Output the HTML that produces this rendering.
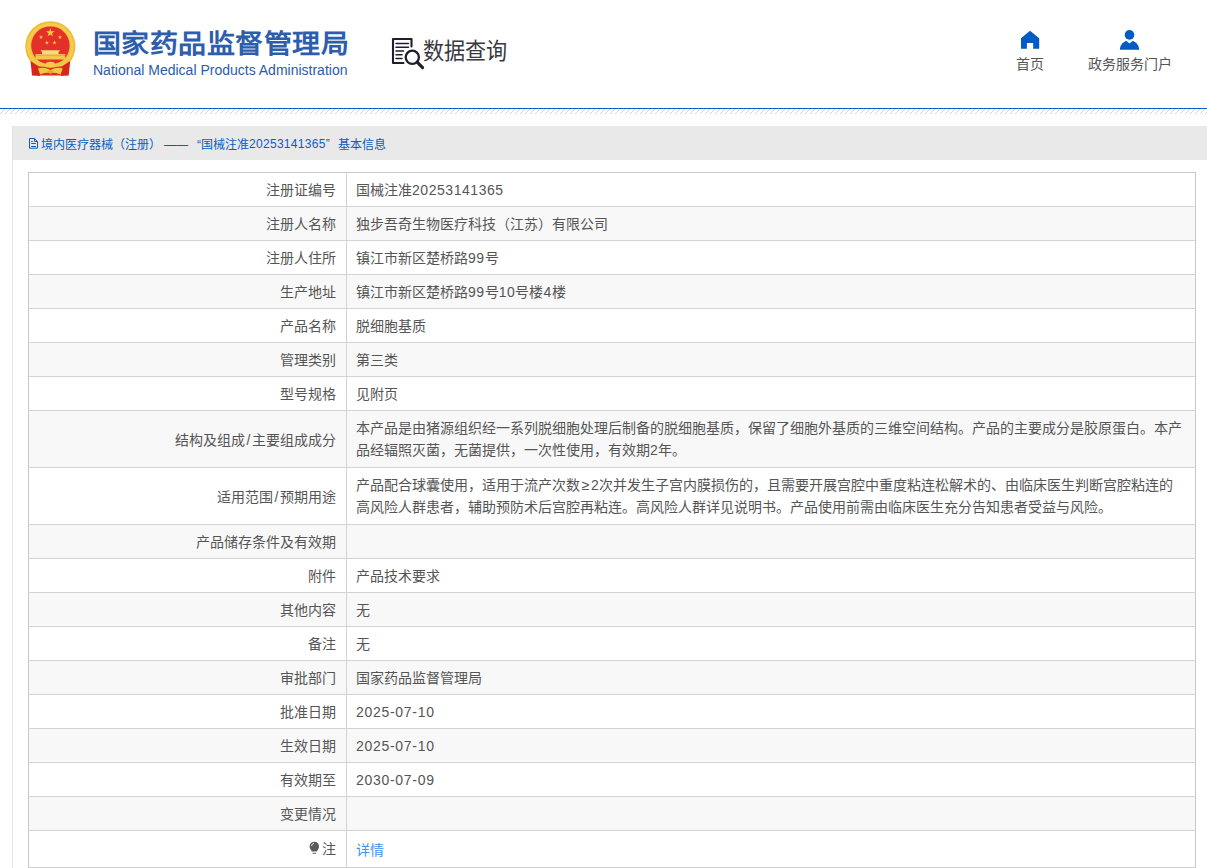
<!DOCTYPE html>
<html lang="zh-CN">
<head>
<meta charset="utf-8">
<style>
*{margin:0;padding:0;box-sizing:border-box;}
html,body{width:1207px;height:868px;overflow:hidden;background:#fff;}
body{font-family:"Liberation Sans",sans-serif;color:#555;position:relative;}
.hdr{position:absolute;left:0;top:0;width:1207px;height:108px;background:#fff;}
.logo{position:absolute;left:0;top:0;width:100px;height:90px;}
.title{position:absolute;left:93px;top:27px;font-size:28px;font-weight:900;transform:scaleY(0.95);transform-origin:0 12px;color:#2d5eae;white-space:nowrap;line-height:36px;letter-spacing:0.45px;}
.entitle{position:absolute;left:93px;top:61.3px;font-size:14px;color:#2a5caa;white-space:nowrap;line-height:18px;}
.sjicon{position:absolute;left:390px;top:36px;width:36px;height:36px;}
.sjtext{position:absolute;left:423px;top:35.5px;font-size:22px;transform:scale(0.96,1.04);transform-origin:0 0;color:#38383f;font-weight:500;white-space:nowrap;line-height:30px;}
.nav{position:absolute;top:28px;text-align:center;font-size:14px;color:#555;white-space:nowrap;}
.nav svg{display:block;margin:0 auto;}
.nav span{position:absolute;left:0;top:26px;line-height:20px;width:100%;}
.blueline{position:absolute;left:0;top:108px;width:1207px;height:1px;background:#0a5fc0;}
.hatch{position:absolute;left:0;top:109px;width:1207px;height:5px;}
.box{position:absolute;left:12px;top:126px;width:1199px;height:760px;border-left:1px solid #e3e3e3;}
.crumb{position:absolute;left:0;top:0;width:1199px;height:34px;background:#e9e9e9;font-size:12px;color:#0a5cc0;line-height:34px;white-space:nowrap;}
table{position:absolute;left:15px;top:46px;width:1168px;border-collapse:collapse;font-size:14px;color:#555;}
td{border:1px solid #d3d3d3;padding:6px 10px 4px 9px;line-height:23px;vertical-align:middle;}
td.l{width:318px;text-align:right;padding-right:10px;}
tr.g td{background:#f8f8f8;}
td.m{line-height:22px;padding-top:6px;padding-bottom:6px;}
span.n{letter-spacing:0.3px;}
td span.n{letter-spacing:0.55px;}
span.d{letter-spacing:0.7px;}
td.l{border-left-color:#c8c8c8;}
tr:first-child td{border-top-color:#c8c8c8;}
td+td{border-right-color:#c8c8c8;}
tr.last td{border-bottom:2px solid #cdcdcd;}
a{color:#3c94f5;text-decoration:none;}
</style>
</head>
<body>
<div class="hdr">
  <svg class="logo" viewBox="0 0 100 90" width="100" height="90">
    <circle cx="50.35" cy="46.3" r="25.1" fill="#edbd35"/>
    <circle cx="50.35" cy="46.3" r="23.3" fill="#f4cd4e"/>
    <circle cx="50.35" cy="46.3" r="20.6" fill="#f0c23c"/>
    <path d="M30.5 61 L39 66.5 L40 76 L32 75.6 Z" fill="#d9261c"/>
    <path d="M70.2 61 L61.7 66.5 L60.7 76 L68.7 75.6 Z" fill="#d9261c"/>
    <path d="M37.5 66.5 L63.2 66.5 L61.5 75.5 L39 75.5 Z" fill="#e02e20"/>
    <circle cx="50.4" cy="45.6" r="19.2" fill="#e5302a"/>
    <path d="M33.5 59.5 Q50.4 72.5 67.3 59.5" fill="none" stroke="#f2c640" stroke-width="3.4"/>
    <path d="M40.5 50.2 H60.2 L58.6 52 V54.2 H42 V52 Z" fill="#f7dc78"/>
    <rect x="35.5" y="54.2" width="29.7" height="1.4" fill="#f6d86a"/>
    <rect x="35.5" y="55.6" width="29.7" height="3.9" fill="#f0c94a"/>
    <ellipse cx="50.4" cy="64.6" rx="4.8" ry="2.8" fill="#f3cd48"/>
    <path d="M38 68.5 Q44 66.5 50.4 70 Q56.8 66.5 62.7 68.5 L60.5 74.5 Q55 71.5 50.4 73.5 Q45.8 71.5 40.2 74.5 Z" fill="#f2c843"/>
    <ellipse cx="50.4" cy="71.8" rx="3" ry="1.6" fill="#e2a92a"/>
    <path d="M50.30,27.90 L51.36,31.15 L54.77,31.15 L52.01,33.15 L53.06,36.40 L50.30,34.40 L47.54,36.40 L48.59,33.15 L45.83,31.15 L49.24,31.15Z" fill="#e6d03c"/><path d="M41.00,34.90 L41.52,36.49 L43.19,36.49 L41.84,37.47 L42.35,39.06 L41.00,38.08 L39.65,39.06 L40.16,37.47 L38.81,36.49 L40.48,36.49Z" fill="#e6d03c"/><path d="M60.00,34.90 L60.52,36.49 L62.19,36.49 L60.84,37.47 L61.35,39.06 L60.00,38.08 L58.65,39.06 L59.16,37.47 L57.81,36.49 L59.48,36.49Z" fill="#e6d03c"/><path d="M46.90,40.30 L47.42,41.89 L49.09,41.89 L47.74,42.87 L48.25,44.46 L46.90,43.48 L45.55,44.46 L46.06,42.87 L44.71,41.89 L46.38,41.89Z" fill="#e6d03c"/><path d="M54.50,40.30 L55.02,41.89 L56.69,41.89 L55.34,42.87 L55.85,44.46 L54.50,43.48 L53.15,44.46 L53.66,42.87 L52.31,41.89 L53.98,41.89Z" fill="#e6d03c"/>
  </svg>
  <div class="title">国家药品监督管理局</div>
  <div class="entitle">National Medical Products Administration</div>
  <svg class="sjicon" viewBox="0 0 36 36" width="36" height="36">
    <path d="M21.5 10.5 V3 H3 V27 H13.5" fill="none" stroke="#1e1e2e" stroke-width="2.1" stroke-linejoin="round" stroke-linecap="round"/>
    <path d="M6 7.5 H18.5 M6 11.3 H18.5 M6 15 H13.5 M6 18.8 H12 M6 22.5 H12" stroke="#1e1e2e" stroke-width="1.5" stroke-linecap="round"/>
    <circle cx="22.3" cy="21.3" r="6.6" fill="none" stroke="#1e1e2e" stroke-width="2.3"/>
    <path d="M27.2 26.2 L32.6 31.6" stroke="#1e1e2e" stroke-width="3.1" stroke-linecap="round"/>
  </svg>
  <div class="sjtext">数据查询</div>
  <div class="nav" style="left:1016px;width:28px;">
    <svg width="20" height="22" viewBox="0 0 20 22" style="margin-left:4px;"><path d="M10 2.8 L19.2 10.2 V20.7 H13.2 V15 H6.9 V20.7 H1 V10.2 Z" fill="#005bc2"/></svg>
    <span>首页</span>
  </div>
  <div class="nav" style="left:1088px;width:84px;">
    <svg width="22" height="22" viewBox="0 0 22 22"><circle cx="10.5" cy="6.9" r="4.8" fill="#005bc2"/><path d="M0.8 21.7 A9.7 9.4 0 0 1 20.2 21.7 Z" fill="#005bc2"/><path d="M6.6 12.2 L14.4 12.2 L10.5 15.6 Z" fill="#fff"/></svg>
    <span>政务服务门户</span>
  </div>
</div>
<div class="blueline"></div>
<svg class="hatch" width="1207" height="5"><path d="M-1 6L6 -1M4 6L11 -1M9 6L16 -1M14 6L21 -1M19 6L26 -1M24 6L31 -1M29 6L36 -1M34 6L41 -1M39 6L46 -1M44 6L51 -1M49 6L56 -1M54 6L61 -1M59 6L66 -1M64 6L71 -1M69 6L76 -1M74 6L81 -1M79 6L86 -1M84 6L91 -1M89 6L96 -1M94 6L101 -1M99 6L106 -1M104 6L111 -1M109 6L116 -1M114 6L121 -1M119 6L126 -1M124 6L131 -1M129 6L136 -1M134 6L141 -1M139 6L146 -1M144 6L151 -1M149 6L156 -1M154 6L161 -1M159 6L166 -1M164 6L171 -1M169 6L176 -1M174 6L181 -1M179 6L186 -1M184 6L191 -1M189 6L196 -1M194 6L201 -1M199 6L206 -1M204 6L211 -1M209 6L216 -1M214 6L221 -1M219 6L226 -1M224 6L231 -1M229 6L236 -1M234 6L241 -1M239 6L246 -1M244 6L251 -1M249 6L256 -1M254 6L261 -1M259 6L266 -1M264 6L271 -1M269 6L276 -1M274 6L281 -1M279 6L286 -1M284 6L291 -1M289 6L296 -1M294 6L301 -1M299 6L306 -1M304 6L311 -1M309 6L316 -1M314 6L321 -1M319 6L326 -1M324 6L331 -1M329 6L336 -1M334 6L341 -1M339 6L346 -1M344 6L351 -1M349 6L356 -1M354 6L361 -1M359 6L366 -1M364 6L371 -1M369 6L376 -1M374 6L381 -1M379 6L386 -1M384 6L391 -1M389 6L396 -1M394 6L401 -1M399 6L406 -1M404 6L411 -1M409 6L416 -1M414 6L421 -1M419 6L426 -1M424 6L431 -1M429 6L436 -1M434 6L441 -1M439 6L446 -1M444 6L451 -1M449 6L456 -1M454 6L461 -1M459 6L466 -1M464 6L471 -1M469 6L476 -1M474 6L481 -1M479 6L486 -1M484 6L491 -1M489 6L496 -1M494 6L501 -1M499 6L506 -1M504 6L511 -1M509 6L516 -1M514 6L521 -1M519 6L526 -1M524 6L531 -1M529 6L536 -1M534 6L541 -1M539 6L546 -1M544 6L551 -1M549 6L556 -1M554 6L561 -1M559 6L566 -1M564 6L571 -1M569 6L576 -1M574 6L581 -1M579 6L586 -1M584 6L591 -1M589 6L596 -1M594 6L601 -1M599 6L606 -1M604 6L611 -1M609 6L616 -1M614 6L621 -1M619 6L626 -1M624 6L631 -1M629 6L636 -1M634 6L641 -1M639 6L646 -1M644 6L651 -1M649 6L656 -1M654 6L661 -1M659 6L666 -1M664 6L671 -1M669 6L676 -1M674 6L681 -1M679 6L686 -1M684 6L691 -1M689 6L696 -1M694 6L701 -1M699 6L706 -1M704 6L711 -1M709 6L716 -1M714 6L721 -1M719 6L726 -1M724 6L731 -1M729 6L736 -1M734 6L741 -1M739 6L746 -1M744 6L751 -1M749 6L756 -1M754 6L761 -1M759 6L766 -1M764 6L771 -1M769 6L776 -1M774 6L781 -1M779 6L786 -1M784 6L791 -1M789 6L796 -1M794 6L801 -1M799 6L806 -1M804 6L811 -1M809 6L816 -1M814 6L821 -1M819 6L826 -1M824 6L831 -1M829 6L836 -1M834 6L841 -1M839 6L846 -1M844 6L851 -1M849 6L856 -1M854 6L861 -1M859 6L866 -1M864 6L871 -1M869 6L876 -1M874 6L881 -1M879 6L886 -1M884 6L891 -1M889 6L896 -1M894 6L901 -1M899 6L906 -1M904 6L911 -1M909 6L916 -1M914 6L921 -1M919 6L926 -1M924 6L931 -1M929 6L936 -1M934 6L941 -1M939 6L946 -1M944 6L951 -1M949 6L956 -1M954 6L961 -1M959 6L966 -1M964 6L971 -1M969 6L976 -1M974 6L981 -1M979 6L986 -1M984 6L991 -1M989 6L996 -1M994 6L1001 -1M999 6L1006 -1M1004 6L1011 -1M1009 6L1016 -1M1014 6L1021 -1M1019 6L1026 -1M1024 6L1031 -1M1029 6L1036 -1M1034 6L1041 -1M1039 6L1046 -1M1044 6L1051 -1M1049 6L1056 -1M1054 6L1061 -1M1059 6L1066 -1M1064 6L1071 -1M1069 6L1076 -1M1074 6L1081 -1M1079 6L1086 -1M1084 6L1091 -1M1089 6L1096 -1M1094 6L1101 -1M1099 6L1106 -1M1104 6L1111 -1M1109 6L1116 -1M1114 6L1121 -1M1119 6L1126 -1M1124 6L1131 -1M1129 6L1136 -1M1134 6L1141 -1M1139 6L1146 -1M1144 6L1151 -1M1149 6L1156 -1M1154 6L1161 -1M1159 6L1166 -1M1164 6L1171 -1M1169 6L1176 -1M1174 6L1181 -1M1179 6L1186 -1M1184 6L1191 -1M1189 6L1196 -1M1194 6L1201 -1M1199 6L1206 -1M1204 6L1211 -1M1209 6L1216 -1" stroke="#d6d6d6" stroke-width="1" fill="none"/></svg>
<div class="box">
  <div class="crumb">
    <svg style="position:absolute;left:16px;top:12px;" width="10" height="11" viewBox="0 0 10 11"><path d="M0.5 0.5 H5.5 L8.5 3.5 V10.2 H0.5 Z" fill="none" stroke="#0a5cc0" stroke-width="1"/><path d="M5.5 0.5 V3.5 H8.5" fill="none" stroke="#0a5cc0" stroke-width="1"/><path d="M2.2 3.5 H3.8 M2.2 5.5 H6.9 M2.2 8.5 H6.9" stroke="#0a5cc0" stroke-width="1"/></svg>
    <span style="position:absolute;left:28px;top:2px;">境内医疗器械（注册）</span>
    <span style="position:absolute;left:151px;top:2px;">——</span>
    <span style="position:absolute;left:184px;top:2px;">“国械注准<span class="n" style="position:relative;top:-1px;">20253141365”</span></span>
    <span style="position:absolute;left:325px;top:2px;">基本信息</span>
  </div>
  <table>
    <tr><td class="l">注册证编号</td><td>国械注准<span class="n">20253141365</span></td></tr>
    <tr class="g"><td class="l">注册人名称</td><td>独步吾奇生物医疗科技（江苏）有限公司</td></tr>
    <tr><td class="l">注册人住所</td><td>镇江市新区楚桥路<span class="n">99</span>号</td></tr>
    <tr class="g"><td class="l">生产地址</td><td>镇江市新区楚桥路<span class="n">99</span>号<span class="n">10</span>号楼<span class="n">4</span>楼</td></tr>
    <tr><td class="l">产品名称</td><td>脱细胞基质</td></tr>
    <tr class="g"><td class="l">管理类别</td><td>第三类</td></tr>
    <tr><td class="l">型号规格</td><td>见附页</td></tr>
    <tr class="g"><td class="l">结构及组成<span style="padding:0 1.6px">/</span>主要组成成分</td><td class="m">本产品是由猪源组织经一系列脱细胞处理后制备的脱细胞基质，保留了细胞外基质的三维空间结构。产品的主要成分是胶原蛋白。本产<br>品经辐照灭菌，无菌提供，一次性使用，有效期<span class="n">2</span>年。</td></tr>
    <tr><td class="l">适用范围<span style="padding:0 1.6px">/</span>预期用途</td><td class="m">产品配合球囊使用，适用于流产次数<span style="padding:0 1.7px">≥</span><span class="n">2</span>次并发生子宫内膜损伤的，且需要开展宫腔中重度粘连松解术的、由临床医生判断宫腔粘连的<br>高风险人群患者，辅助预防术后宫腔再粘连。高风险人群详见说明书。产品使用前需由临床医生充分告知患者受益与风险。</td></tr>
    <tr class="g"><td class="l">产品储存条件及有效期</td><td></td></tr>
    <tr><td class="l">附件</td><td>产品技术要求</td></tr>
    <tr class="g"><td class="l">其他内容</td><td>无</td></tr>
    <tr><td class="l">备注</td><td>无</td></tr>
    <tr class="g"><td class="l">审批部门</td><td>国家药品监督管理局</td></tr>
    <tr><td class="l">批准日期</td><td><span class="d">2025-07-10</span></td></tr>
    <tr class="g"><td class="l">生效日期</td><td><span class="d">2025-07-10</span></td></tr>
    <tr><td class="l">有效期至</td><td><span class="d">2030-07-09</span></td></tr>
    <tr class="g"><td class="l">变更情况</td><td></td></tr>
    <tr class="last"><td class="l" style="height:37px;padding-right:10px;"><svg width="11" height="14" viewBox="0 0 11 14" style="vertical-align:-1px;margin-right:2px;"><path d="M5.3 0.8 C8.2 0.8 10 2.9 10 5.4 C10 7.6 8.6 8.7 7.7 10.6 H3 C2.1 8.7 0.6 7.6 0.6 5.4 C0.6 2.9 2.5 0.8 5.3 0.8 Z" fill="#5a5a5e"/><path d="M2.6 5 C2.7 3.6 3.6 2.6 4.9 2.3" fill="none" stroke="#fff" stroke-width="0.9"/><path d="M3.6 12.3 H7" stroke="#5a5a5e" stroke-width="1"/></svg>注</td><td><a style="position:relative;top:1px;">详情</a></td></tr>
  </table>
</div>
</body>
</html>
